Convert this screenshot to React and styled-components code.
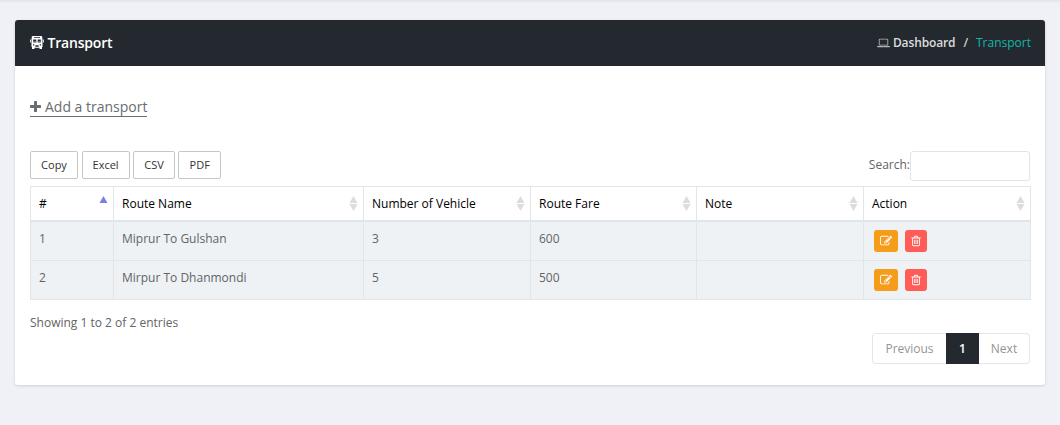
import React from "react";
import styled, { createGlobalStyle, css } from "styled-components";

const Global = createGlobalStyle`
  * { box-sizing: border-box; }
  body {
    margin: 0;
    background: #f0f1f7;
    color: #626466;
    font: 13px/18px "Open Sans", sans-serif;
  }
`;

const Page = styled.div`
  height: 425px;
  padding: 20px 15px 0;
  overflow: hidden;
  background: linear-gradient(#e2e3e8, #f0f1f7) top / 100% 3px no-repeat #f0f1f7;
`;
const Card = styled.section`
  height: 365px;
  background: #fff;
  border-radius: 3px;
  box-shadow: 0 1px 3px rgba(0, 0, 0, 0.14);
`;
const Header = styled.header`
  display: flex;
  align-items: center;
  justify-content: space-between;
  height: 46px;
  padding: 0 14px 0 15px;
  background: #242930;
  border-radius: 3px 3px 0 0;
`;
const Title = styled.h3`
  display: flex;
  align-items: center;
  gap: 3.500px;
  margin: 0;
  color: #fff;
  font-size: 14px;
  font-weight: 600;
  line-height: 20px;
  letter-spacing: -0.2px;
`;
const Crumbs = styled.nav`
  display: flex;
  align-items: center;
  font-size: 12px;
  font-weight: 600;
  color: #ddd;
`;
const Crumb = styled.span`
  display: flex;
  align-items: center;
  gap: 3px;
  letter-spacing: -0.13px;
  svg { color: #b4b6b8; }
  & + &::before {
    content: "/";
    padding: 0 5px 0 8px;
    color: #ccc;
  }
`;
const Current = styled.span`
  color: #12b5aa;
  font-weight: 400;
  letter-spacing: 0;
`;
const Body = styled.div`
  padding: 31px 15px 0;
`;
const AddLink = styled.a`
  display: inline-flex;
  align-items: center;
  gap: 4px;
  height: 20px;
  border-bottom: 1px solid #6a6c6f;
  color: #6a6c6f;
  font-size: 14px;
  line-height: 19px;
`;
const Toolbar = styled.div`
  display: flex;
  justify-content: space-between;
  align-items: flex-start;
  margin-top: 34px;
  height: 35px;
`;
const Exports = styled.div`
  display: flex;
  gap: 3.600px;
`;
const ExportButton = styled.button`
  width: ${(p) => p.$width}px;
  height: 28px;
  padding: 0;
  border: 1px solid #c6c6c6;
  border-radius: 2px;
  background: #fff;
  color: #333;
  font: 11px/16px "Open Sans", sans-serif;
`;
const Search = styled.label`
  display: flex;
  line-height: 27px;
  font-size: 12px;
`;
const SearchInput = styled.input`
  width: 120px;
  height: 30px;
  border: 1px solid #e1e5e9;
  border-radius: 3px;
  background: #fff;
`;
const Table = styled.table`
  width: 1001px;
  table-layout: fixed;
  border-collapse: separate;
  border-spacing: 0;
  border: solid #e1e5e9;
  border-width: 1px 0 0 1px;
  font-size: 12px;
`;
const cell = css`
  border-right: 1px solid #e1e5e9;
  text-align: left;
  vertical-align: top;
  font-weight: 400;
`;
const HeadCell = styled.th`
  ${cell}
  width: ${(p) => p.$width}px;
  height: 35px;
  padding: 8px 8px 7px;
  border-bottom: 2px solid #e1e5e9;
  color: #000;
`;
const HeadContent = styled.div`
  display: flex;
  justify-content: space-between;
  line-height: 18px;
  svg { margin: 1px -3px 0 0; }
`;
const Cell = styled.td`
  ${cell}
  height: 39px;
  padding: 8px;
  border-bottom: 1px solid #e1e5e9;
  background: #eef2f5;
`;
const Actions = styled.div`
  display: flex;
  gap: 7px;
  padding-left: 2px;
`;
const ActionButton = styled.button`
  display: flex;
  align-items: center;
  justify-content: center;
  width: ${(p) => (p.$danger ? 22 : 24)}px;
  height: 22px;
  padding: 0;
  border: 0;
  border-radius: 3px;
  background: ${(p) => (p.$danger ? "#ff5b57" : "#f59c1a")};
  color: #fff;
`;
const Summary = styled.div`
  margin-top: 14px;
  font-size: 12px;
`;
const Pager = styled.div`
  display: flex;
  justify-content: flex-end;
  margin-top: 1px;
`;
const PageButton = styled.button`
  width: ${(p) => p.$width}px;
  height: 31px;
  padding: 0;
  border: 1px solid #e4e7ea;
  border-width: ${(p) => (p.$edge === "left" ? "1px 0 1px 1px" : "1px 1px 1px 0")};
  border-radius: ${(p) => (p.$edge === "left" ? "4px 0 0 4px" : "0 4px 4px 0")};
  background: #fff;
  color: #949494;
  font: 12px/18px "Open Sans", sans-serif;
  ${(p) =>
    p.$active &&
    css`
      border: 0;
      border-radius: 0;
      background: #242930;
      color: #fff;
      font-weight: 600;
    `}
`;

const Svg = styled.svg`
  display: block;
  flex: none;
  fill: currentColor;
`;

const BusSvg = styled(Svg)`
  margin-top: -2px;
`;

const BusIcon = () => (
  <BusSvg width="14" height="13" viewBox="0 0 14 13">
    <path
      fillRule="evenodd"
      d="M3 0h8q1.200 0 1.300 1.200L12.500 4v7h-.5v2H9.500v-1.200h-5V13H2v-2h-.5V4L1.700 1.200Q1.800 0 3 0zM4 1.200v.7h6v-.7zM3.200 3.600v3h3.100v-3zM7.700 3.600v3h3.100v-3zM3 8.200v1.300h1.300V8.200zM9.700 8.200v1.300H11V8.200zM5.300 9.200v1.600h3.400V9.200z"
    />
    <path d="M3.600 5h2.300v1H3.600zM8.100 5h2.300v1H8.100z" opacity=".35" />
    <path d="M0 3.500h1v3H0zM13 3.500h1v3h-1z" opacity=".8" />
  </BusSvg>
);
const LaptopIcon = () => (
  <Svg width="13" height="12" viewBox="0 0 1920 1792">
    <path d="M416 1280q-66 0-113-47t-47-113v-704q0-66 47-113t113-47h1088q66 0 113 47t47 113v704q0 66-47 113t-113 47h-1088zm-32-864v704q0 13 9.500 22.500t22.500 9.500h1088q13 0 22.500-9.500t9.500-22.500v-704q0-13-9.500-22.500t-22.500-9.500h-1088q-13 0-22.500 9.500t-9.500 22.500zm1376 928h160v96q0 40-47 68t-113 28h-1600q-66 0-113-28t-47-68v-96h1760zm-720 96q16 0 16-16t-16-16h-160q-16 0-16 16t16 16h160z" />
  </Svg>
);
const PlusIcon = () => (
  <Svg width="11" height="11" viewBox="192 128 1408 1408">
    <path d="M1600 736v192q0 40-28 68t-68 28h-416v416q0 40-28 68t-68 28h-192q-40 0-68-28t-28-68v-416h-416q-40 0-68-28t-28-68v-192q0-40 28-68t68-28h416v-416q0-40 28-68t68-28h192q40 0 68 28t28 68v416h416q40 0 68 28t28 68z" />
  </Svg>
);
const EditIcon = () => (
  <Svg width="12" height="12" viewBox="0 0 1792 1792">
    <path d="M888 1184l116-116-152-152-116 116v56h96v96h56zm440-720q-16-16-33 1l-350 350q-17 17-1 33t33-1l350-350q17-17 1-33zm80 594v190q0 119-84.500 203.500t-203.500 84.500h-832q-119 0-203.500-84.500t-84.500-203.500v-832q0-119 84.500-203.500t203.500-84.500h832q63 0 117 25 15 7 18 23 3 17-9 29l-49 49q-14 14-32 8-23-6-45-6h-832q-66 0-113 47t-47 113v832q0 66 47 113t113 47h832q66 0 113-47t47-113v-126q0-13 9-22l64-64q15-15 35-7t20 29zm-96-738l288 288-672 672h-288v-288zm444 132l-92 92-288-288 92-92q28-28 68-28t68 28l152 152q28 28 28 68t-28 68z" />
  </Svg>
);
const TrashIcon = () => (
  <Svg width="12" height="12" viewBox="0 0 1792 1792">
    <path d="M704 736v576q0 14-9 23t-23 9h-64q-14 0-23-9t-9-23v-576q0-14 9-23t23-9h64q14 0 23 9t9 23zm256 0v576q0 14-9 23t-23 9h-64q-14 0-23-9t-9-23v-576q0-14 9-23t23-9h64q14 0 23 9t9 23zm256 0v576q0 14-9 23t-23 9h-64q-14 0-23-9t-9-23v-576q0-14 9-23t23-9h64q14 0 23 9t9 23zm128 724v-948h-896v948q0 22 7 40.500t14.500 27 10.500 8.500h832q3 0 10.500-8.500t14.500-27 7-40.500zm-672-1076h448l-48-117q-7-9-17-11h-317q-10 2-17 11zm928 32v64q0 14-9 23t-23 9h-96v948q0 83-47 143.500t-113 60.500h-832q-66 0-113-58.500t-47-141.500v-952h-96q-14 0-23-9t-9-23v-64q0-14 9-23t23-9h309l70-167q15-37 54-63t79-26h320q40 0 79 26t54 63l70 167h309q14 0 23 9t9 23z" />
  </Svg>
);
const SortIcon = ({ ascending }) => (
  <Svg width="9" height="16" viewBox="0 0 9 16">
    <path d="M4.500 0L8.500 7H.5z" fill={ascending ? "#7b7fe0" : "#dcdcdc"} />
    {!ascending && <path d="M.5 8h8l-4 7z" fill="#dcdcdc" />}
  </Svg>
);

const exportsList = [["Copy", 48], ["Excel", 48], ["CSV", 41.6], ["PDF", 42.6]];
const columns = [
  ["#", 83],
  ["Route Name", 250],
  ["Number of Vehicle", 167],
  ["Route Fare", 166],
  ["Note", 167],
  ["Action", 167],
];
const rows = [
  ["1", "Miprur To Gulshan", "3", "600", ""],
  ["2", "Mirpur To Dhanmondi", "5", "500", ""],
];

export default function App() {
  return (
    <Page>
      <Global />
      <Card>
        <Header>
          <Title><BusIcon />Transport</Title>
          <Crumbs>
            <Crumb><LaptopIcon />Dashboard</Crumb>
            <Crumb><Current>Transport</Current></Crumb>
          </Crumbs>
        </Header>
        <Body>
          <AddLink><PlusIcon />Add a transport</AddLink>
          <Toolbar>
            <Exports>
              {exportsList.map(([name, width]) => (
                <ExportButton key={name} $width={width}>{name}</ExportButton>
              ))}
            </Exports>
            <Search>Search:<SearchInput /></Search>
          </Toolbar>
          <Table>
            <thead>
              <tr>
                {columns.map(([name, width], i) => (
                  <HeadCell key={name} $width={width}>
                    <HeadContent>{name}<SortIcon ascending={i === 0} /></HeadContent>
                  </HeadCell>
                ))}
              </tr>
            </thead>
            <tbody>
              {rows.map((row) => (
                <tr key={row[0]}>
                  {row.map((value, i) => <Cell key={i}>{value}</Cell>)}
                  <Cell>
                    <Actions>
                      <ActionButton aria-label="Edit"><EditIcon /></ActionButton>
                      <ActionButton $danger aria-label="Delete"><TrashIcon /></ActionButton>
                    </Actions>
                  </Cell>
                </tr>
              ))}
            </tbody>
          </Table>
          <Summary>Showing 1 to 2 of 2 entries</Summary>
          <Pager>
            <PageButton $width={74} $edge="left">Previous</PageButton>
            <PageButton $width={33} $active>1</PageButton>
            <PageButton $width={51}>Next</PageButton>
          </Pager>
        </Body>
      </Card>
    </Page>
  );
}
